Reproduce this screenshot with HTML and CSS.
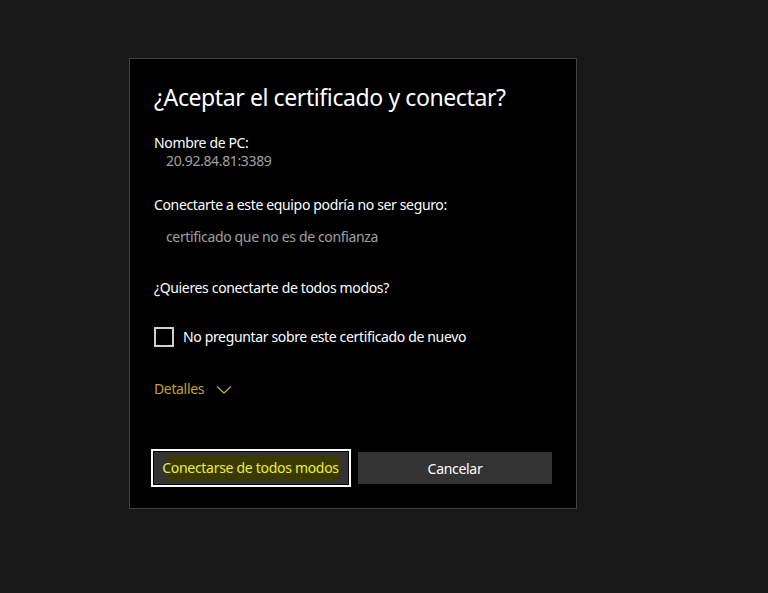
FILE: index.html
```html
<!DOCTYPE html>
<html lang="es">
<head>
<meta charset="utf-8">
<link rel="stylesheet" href="styles.css">
</head>
<body>
<div class="page">
  <div class="dialog">
    <h1 class="title">¿Aceptar el certificado y conectar?</h1>
    <div class="label l-name">Nombre de PC:</div>
    <div class="value">20.92.84.81:3389</div>
    <div class="label l-warn">Conectarte a este equipo podría no ser seguro:</div>
    <div class="value v-cert">certificado que no es de confianza</div>
    <div class="label l-ask">¿Quieres conectarte de todos modos?</div>
    <label class="check">
      <span class="box"></span>
      <span class="check-text">No preguntar sobre este certificado de nuevo</span>
    </label>
    <div class="details">
      <span>Detalles</span>
      <svg class="chev" width="16" height="10" viewBox="0 0 16 10"><path d="M1 1.5 L8 8 L15 1.5" fill="none" stroke="#c4a03a" stroke-width="1.3"/></svg>
    </div>
    <div class="buttons">
      <button class="btn btn-primary"><span class="hl">Conectarse de todos modos</span></button>
      <button class="btn">Cancelar</button>
    </div>
  </div>
</div>
</body>
</html>
```
FILE: styles.css
```css
* { box-sizing: border-box; }
html, body { margin: 0; padding: 0; }
body {
  background: #181818;
  width: 768px;
  height: 593px;
  overflow: hidden;
  font-family: "Noto Sans", "Open Sans", sans-serif;
  color: #ffffff;
}
.page {
  padding-top: 58px;
  padding-left: 129px;
}
.dialog {
  width: 448px;
  height: 451px;
  background: #000;
  border: 1px solid #434343;
  padding: 22px 23px 0 24px;
  display: flex;
  flex-direction: column;
}
.title {
  margin: 0;
  font-weight: 400;
  font-size: 23px;
  line-height: 32px;
  letter-spacing: -0.4px;
}
.label, .value, .check-text, .details {
  font-size: 14px;
  line-height: 18px;
  letter-spacing: -0.35px;
}
.label { color: #fff; }
.value { color: #a0a0a0; padding-left: 12px; }
.l-name { margin-top: 21px; }
.l-warn { margin-top: 26px; }
.v-cert { margin-top: 14px; }
.l-ask { margin-top: 33px; }
.check {
  margin-top: 30px;
  display: flex;
  align-items: center;
  gap: 9px;
}
.box {
  width: 20px;
  height: 20px;
  border: 2px solid #cfcfcf;
}
.details {
  margin-top: 33px;
  color: #c4a03a;
  display: flex;
  align-items: center;
  gap: 12px;
}
.chev { margin-top: 1px; }
.buttons {
  margin-top: 54px;
  display: flex;
  gap: 10px;
}
.btn {
  width: 194px;
  height: 32px;
  background: #333333;
  border: none;
  color: #fff;
  font-family: inherit;
  font-size: 14px;
  letter-spacing: -0.3px;
  padding: 0;
  display: flex;
  align-items: center;
  justify-content: center;
}
.btn-primary {
  box-shadow: 0 0 0 1px #000, 0 0 0 3px #fff;
}
.hl {
  color: #eeee30;
  background: linear-gradient(to right, transparent 5px, #393900 5px);
  padding: 2px 1px 4px 0;
  border-radius: 0 5px 5px 0;
}
```
